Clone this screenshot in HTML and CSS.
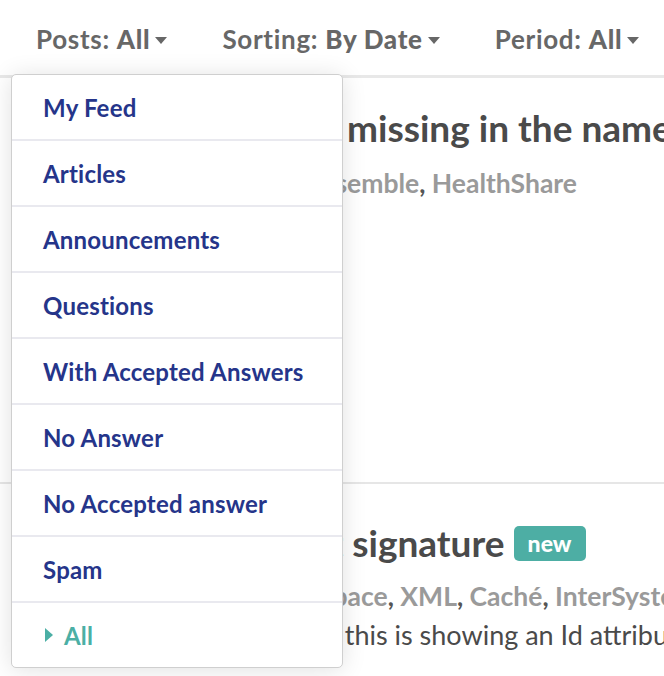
FILE: index.html
```html
<!DOCTYPE html>
<html lang="en">
<head>
<meta charset="utf-8">
<title>Posts</title>
<link rel="stylesheet" href="styles.css">
</head>
<body>
<div class="page">
  <div class="filters">
    <div class="filter">Posts: <b>All</b><span class="caret"></span></div>
    <div class="filter">Sorting: <b>By Date</b><span class="caret"></span></div>
    <div class="filter">Period: <b>All</b><span class="caret"></span></div>
  </div>
  <div class="feed">
    <div class="post post-first">
      <h2 class="title t1">Property missing in the namespace mapping</h2>
      <div class="tags g1"><a>Caché</a>, <a>Ensemble</a>, <a>HealthShare</a></div>
    </div>
    <div class="post post-second">
      <h2 class="title t2">Export without signature <span class="badge">new</span></h2>
      <div class="tags g2"><a>Namespace</a>, <a>XML</a>, <a>Caché</a>, <a>InterSystems IRIS</a></div>
      <p class="excerpt">When exporting, this is showing an Id attribute on every object</p>
    </div>
  </div>
  <ul class="menu">
    <li class="menu-item">My Feed</li>
    <li class="menu-item">Articles</li>
    <li class="menu-item">Announcements</li>
    <li class="menu-item">Questions</li>
    <li class="menu-item">With Accepted Answers</li>
    <li class="menu-item">No Answer</li>
    <li class="menu-item">No Accepted answer</li>
    <li class="menu-item">Spam</li>
    <li class="menu-item active"><span class="arrow"></span>All</li>
  </ul>
</div>
</body>
</html>
```

FILE: styles.css
```css
html, body {
  margin: 0;
  padding: 0;
  background: #ffffff;
}
body {
  font-family: "Lato", "Open Sans", sans-serif;
  overflow: hidden;
}
.page {
  position: relative;
  width: 664px;
  height: 676px;
  overflow: hidden;
}
.filters {
  display: flex;
  align-items: center;
  gap: 55px;
  height: 72px;
  padding: 3px 0 0 36px;
}
.filter {
  display: flex;
  align-items: center;
  font-size: 26px;
  letter-spacing: 0.7px;
  font-weight: 700;
  color: #676767;
  white-space: nowrap;
}
.filter b {
  font-weight: 900;
  margin-left: 7px;
}
.caret {
  width: 0;
  height: 0;
  margin-left: 5px;
  margin-top: 2px;
  border-left: 6px solid transparent;
  border-right: 6px solid transparent;
  border-top: 7px solid #676767;
}
.feed {
  border-top: 3px solid #e8e8e8;
}
.post {
  white-space: nowrap;
}
.post-first {
  height: 406px;
  padding-top: 30px;
  box-sizing: border-box;
  border-bottom: 2px solid #e6e6e6;
}
.post-second {
  padding-top: 39px;
}
.title {
  margin: 0;
  font-size: 37px;
  line-height: 40px;
  font-weight: 700;
  color: #4a4a4a;
  display: flex;
  align-items: center;
}
.t1 { padding-left: 194px; }
.t2 { padding-left: 95px; }
.badge {
  display: inline-block;
  margin-left: 9px;
  width: 72px;
  height: 35px;
  line-height: 34px;
  text-align: center;
  background: #4daea4;
  color: #ffffff;
  border-radius: 5px;
  font-size: 23px;
  font-weight: 900;
}
.tags {
  margin-top: 20px;
  font-size: 26.5px;
  line-height: 30px;
  font-weight: 700;
  color: #555;
}
.tags a {
  color: #9a9a9a;
}
.g1 { padding-left: 220px; }
.g2 { padding-left: 251px; margin-top: 18px; }
.excerpt {
  margin: 8px 0 0;
  padding-left: 139px;
  font-size: 27px;
  line-height: 32px;
  color: #4a4a4a;
}
.menu {
  position: absolute;
  top: 74px;
  left: 11px;
  width: 332px;
  margin: 0;
  padding: 0;
  list-style: none;
  background: #ffffff;
  border: 1px solid #cfcfcf;
  border-radius: 5px;
  box-sizing: border-box;
  box-shadow: 0 2px 24px rgba(0, 0, 0, 0.12);
}
.menu-item {
  display: flex;
  align-items: center;
  height: 64px;
  padding-left: 31px;
  border-bottom: 2px solid #e9e9ef;
  font-size: 24px;
  letter-spacing: 0.2px;
  font-weight: 700;
  color: #25358a;
  white-space: nowrap;
}
.menu-item:last-child {
  border-bottom: 0;
}
.menu-item.active {
  color: #4bafa5;
}
.arrow {
  width: 0;
  height: 0;
  margin: 0 11px 0 2px;
  border-top: 7px solid transparent;
  border-bottom: 7px solid transparent;
  border-left: 8px solid #4bafa5;
}
```
